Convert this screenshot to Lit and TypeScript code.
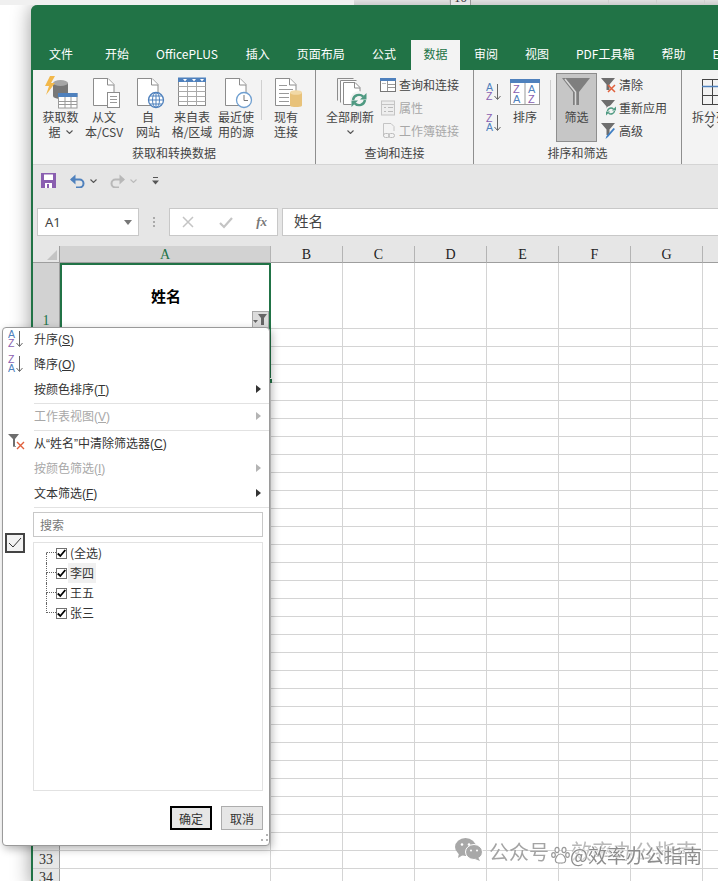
import { LitElement, html, css, svg } from 'lit';
import { customElement } from 'lit/decorators.js';

const BLUE = '#4f81bd';
const GRAY = '#8c8c8c';
const PURPLE = '#8a5fb0';

const doc = svg`<path d="M6.5 2.5H21l6 6v21H6.5z" fill="#fff" stroke="${GRAY}"/><path d="M20.5 2.5v6.5H27" fill="#fff" stroke="${GRAY}"/>`;

const smallFunnel = (c = '#6e6e6e') => svg`<path d="M1 1h14L9.5 7.5V13H6.5V7.5z" fill="${c}"/>`;
const redX = svg`<path d="M8 8l7 7M15 8l-7 7" stroke="#e0603c" stroke-width="1.5"/>`;
const refresh = (cx: number, cy: number, r: number, w = 2) => svg`
  <path d="M${cx - r} ${cy}a${r} ${r} 0 0 1 ${r * 1.7} ${-r * 0.55}" fill="none" stroke="#4f9a82" stroke-width="${w}"/>
  <path d="M${cx + r} ${cy}a${r} ${r} 0 0 1 ${-r * 1.7} ${r * 0.55}" fill="none" stroke="#4f9a82" stroke-width="${w}"/>
  <path d="M${cx + r + 1.5} ${cy - r - 1}v${r + 0.5}h${-r - 0.5}z" fill="#4f9a82"/>
  <path d="M${cx - r - 1.5} ${cy + r + 1}v${-r - 0.5}h${r + 0.5}z" fill="#4f9a82"/>`;

const sortAz = (top: string, bottom: string, topC: string, botC: string) => html`<svg width="16" height="18" viewBox="0 0 16 18">
  <text x="0" y="8" font-family="Liberation Sans" font-size="10.5" fill="${topC}">${top}</text>
  <text x="0" y="17" font-family="Liberation Sans" font-size="10.5" fill="${botC}">${bottom}</text>
  <path d="M11.5 1v15M8.5 13l3 3.5 3-3.5" fill="none" stroke="#666"/></svg>`;

const icons = {
  getData: html`<svg width="34" height="33" viewBox="0 0 34 33">
    <ellipse cx="16.5" cy="20" rx="7.5" ry="3" fill="#777"/><rect x="9" y="7" width="15" height="13" fill="#777"/>
    <ellipse cx="16.5" cy="7" rx="7.5" ry="3" fill="#a6a6a6"/>
    <path d="M6 0L1 10h4L2 19l9-12H7l4-7z" fill="#f2b84b"/>
    <rect x="14.5" y="17.5" width="18.5" height="14.5" fill="#fff" stroke="#9a9a9a"/><rect x="14" y="17" width="19.5" height="4" fill="${BLUE}"/>
    <path d="M14.5 25.5h18.5M14.5 28.500h18.500M21 21v11M27 21v11" stroke="#9a9a9a"/></svg>`,
  fromText: html`<svg width="34" height="33" viewBox="0 0 34 33">${doc}
    <rect x="20.500" y="16.500" width="12" height="15" fill="#fff" stroke="${GRAY}"/>
    <path d="M23 20.500h7M23 23.500h7M23 26.500h7" stroke="#999"/></svg>`,
  fromWeb: html`<svg width="34" height="33" viewBox="0 0 34 33">${doc}
    <circle cx="25" cy="24" r="7.500" fill="#fff" stroke="${BLUE}" stroke-width="1.300"/>
    <ellipse cx="25" cy="24" rx="3.500" ry="7.500" fill="none" stroke="${BLUE}"/>
    <path d="M17.500 24h15M19 20h12M19 28h12M25 16.500v15" stroke="${BLUE}" fill="none"/></svg>`,
  fromTable: html`<svg width="34" height="33" viewBox="0 0 34 33">
    <rect x="3.500" y="2.500" width="27" height="27" fill="#fff" stroke="${GRAY}"/><rect x="3" y="1.500" width="28" height="4.500" fill="${BLUE}"/>
    <path d="M8 3h4l-2 2.500zM17 3h4l-2 2.500zM25 3h4l-2 2.500z" fill="#fff"/>
    <path d="M3.500 10.500h27M3.500 15.500h27M3.500 20.500h27M3.500 25.500h27M12.500 6v24M21.500 6v24" stroke="#aaa"/></svg>`,
  recent: html`<svg width="34" height="33" viewBox="0 0 34 33">${doc}
    <circle cx="25" cy="24" r="7.500" fill="#fff" stroke="#6f9fd0" stroke-width="1.300"/><path d="M25 19v5.500h4" fill="none" stroke="#777"/></svg>`,
  existing: html`<svg width="34" height="33" viewBox="0 0 34 33">${doc}
    <path d="M10 9.500h8M10 13.500h14M10 17.500h10M10 21.500h10M10 25.500h10" stroke="#999"/>
    <path d="M21 16.500v13c0 2 12 2 12 0v-13z" fill="#e8c27a"/><ellipse cx="27" cy="16.500" rx="6" ry="2.300" fill="#f2d9a6"/></svg>`,
  refreshAll: html`<svg width="34" height="33" viewBox="0 0 34 33">
    <path d="M4.500 24.500V2.500h16" fill="none" stroke="${GRAY}"/><path d="M7.500 26.500V4.500h16" fill="#fff" stroke="${GRAY}"/>
    <path d="M10.500 28.500V6.500H22l5 5v17z" fill="#fff" stroke="${GRAY}"/><path d="M21.500 6.500V12H27" fill="none" stroke="${GRAY}"/>
    <circle cx="26" cy="24" r="9" fill="#f3f3f3"/>${refresh(26, 24, 6, 2.400)}</svg>`,
  query: html`<svg width="16" height="16" viewBox="0 0 16 16">
    <rect x="0.500" y="1.500" width="15" height="13" fill="#fff" stroke="#777"/><rect x="0" y="1" width="16" height="3" fill="${BLUE}"/>
    <path d="M7.500 4v10M8 7.500h7M8 10.500h7" stroke="#999"/><path d="M2 6.500h4" stroke="#bbb"/></svg>`,
  props: html`<svg width="16" height="16" viewBox="0 0 16 16">
    <rect x="1.500" y="1" width="13" height="14" fill="#eee" stroke="#c4c4c4"/><path d="M2 4.500h12" stroke="#c4c4c4"/>
    <path d="M4 7.500h2M4 11.500h2M8 7.500h5M8 11.500h5" stroke="#bbb"/></svg>`,
  links: html`<svg width="16" height="17" viewBox="0 0 16 17">
    <path d="M3.500 14V1.500H11l3 3V9" fill="none" stroke="#c4c4c4"/>
    <rect x="3.500" y="11.500" width="6" height="4" rx="2" fill="none" stroke="#bbb"/><rect x="8.500" y="11.500" width="6" height="4" rx="2" fill="none" stroke="#bbb"/></svg>`,
  sortBig: html`<svg width="30" height="33" viewBox="0 0 30 33">
    <rect x="0.500" y="4.500" width="29" height="24" fill="#fff" stroke="#999"/><rect x="0" y="3" width="30" height="4" fill="${BLUE}"/><path d="M15 7v21" stroke="#999"/>
    <text x="3" y="17" font-family="Liberation Sans" font-size="11" fill="${PURPLE}">Z</text><text x="3" y="27" font-family="Liberation Sans" font-size="11" fill="${BLUE}">A</text>
    <text x="18" y="17" font-family="Liberation Sans" font-size="11" fill="${BLUE}">A</text><text x="18" y="27" font-family="Liberation Sans" font-size="11" fill="${PURPLE}">Z</text></svg>`,
  funnelBig: html`<svg width="39" height="35" viewBox="0 0 39 35">
    <path d="M5 4h28L22 18v13h-6V18z" fill="#7f7f7f"/><path d="M8 5l10.500 13v13" fill="none" stroke="#d9d9d9" stroke-width="1.500"/></svg>`,
  clear: html`<svg width="16" height="16" viewBox="0 0 16 16">${smallFunnel()}${redX}</svg>`,
  reapply: html`<svg width="16" height="18" viewBox="0 0 16 18">${smallFunnel()}<circle cx="11" cy="12" r="5.500" fill="#f3f3f3"/>${refresh(11, 12, 3.500, 1.500)}</svg>`,
  advanced: html`<svg width="16" height="18" viewBox="0 0 16 18">${smallFunnel()}<path d="M15 7l-7 8-2.500 2 1-3 7-8z" fill="#3f7fc4"/></svg>`,
  split: html`<svg width="30" height="33" viewBox="0 0 30 33">
    <path d="M7 3.500h23M7 19.500h23M7 28.500h23M7.500 3v7M7.500 10v19M17.500 3v7M17.500 10v19M27.500 3v26" stroke="#444" fill="none"/>
    <path d="M7 10.500h23" stroke="${BLUE}" stroke-width="1.500"/></svg>`,
  save: html`<svg width="15" height="15" viewBox="0 0 15 15">
    <path d="M0 0h15v15H0z" fill="${PURPLE}"/><rect x="3" y="1.500" width="9" height="5.500" fill="#fff"/><rect x="4" y="10" width="7" height="5" fill="#fff"/><rect x="6" y="11" width="2" height="4" fill="${PURPLE}"/></svg>`,
  undo: html`<svg width="15" height="14" viewBox="0 0 15 14">
    <path d="M1.500 5.500h8a4 4 0 0 1 0 8H6" fill="none" stroke="${BLUE}" stroke-width="2"/><path d="M5.500 0.500v10L0 5.500z" fill="${BLUE}"/></svg>`,
  redo: html`<svg width="15" height="14" viewBox="0 0 15 14">
    <path d="M13.500 5.500h-8a4 4 0 0 0 0 8H9" fill="none" stroke="#b8b8b8" stroke-width="2"/><path d="M9.500 0.500v10l5.500-5z" fill="#b8b8b8"/></svg>`,
  caret: (c: string) => html`<svg width="7" height="4" viewBox="0 0 7 4"><path d="M0.500 0.500l3 3 3-3" fill="none" stroke="${c}" stroke-width="1.100"/></svg>`,
  customise: html`<svg width="7" height="8" viewBox="0 0 7 8"><path d="M1 0.500h5" stroke="#555"/><path d="M0 3.500h7L3.500 7.500z" fill="#555"/></svg>`,
  cancel: html`<svg width="14" height="14" viewBox="0 0 14 14"><path d="M2 2l10 10M12 2L2 12" stroke="#c4c4c4" stroke-width="1.500"/></svg>`,
  enter: html`<svg width="14" height="14" viewBox="0 0 14 14"><path d="M1 8l4 4 8-9" fill="none" stroke="#c4c4c4" stroke-width="2.200"/></svg>`,
  corner: html`<svg width="10" height="10" viewBox="0 0 10 10"><path d="M10 0v10H0z" fill="#c4c4c4"/></svg>`,
  cellFilter: html`<svg width="15" height="13" viewBox="0 0 15 13"><path d="M5 1h9L11 5v7H8V5z" fill="#666"/><path d="M0 7h5L2.500 10z" fill="#666"/></svg>`,
  menuClear: html`<svg width="18" height="17" viewBox="0 0 18 17">
    <path d="M0 0h11L7 5v7H5V5z" fill="#6e6e6e"/><path d="M5 12.500h3" stroke="#999"/><path d="M9 8l7 7M16 8l-7 7" stroke="#e0603c" stroke-width="1.400"/></svg>`,
  bigCheck: html`<svg width="16" height="14" viewBox="0 0 16 14"><path d="M2 7l4 4 8-9" fill="none" stroke="#333"/></svg>`,
  tick: html`<svg width="9" height="9" viewBox="0 0 9 9"><path d="M0.800 4.500l2.500 2.500 5-6" fill="none" stroke="#000" stroke-width="1.800"/></svg>`,
  grip: html`<svg width="9" height="9" viewBox="0 0 9 9"><path d="M6 0h2v2H6zM1 5h2v2H1zM6 5h2v2H6z" fill="#b4b4b4"/></svg>`,
  wechat: html`<svg width="28" height="23" viewBox="0 0 28 23">
    <ellipse cx="10.500" cy="9" rx="10.500" ry="9" fill="#a8a8a8"/><path d="M4 15l-1 5 5-3z" fill="#a8a8a8"/>
    <ellipse cx="19" cy="14" rx="8.500" ry="7.500" fill="#a8a8a8" stroke="#fff"/><path d="M23 19l2 4-5-2z" fill="#a8a8a8"/>
    <circle cx="7" cy="6.500" r="1.300" fill="#fff"/><circle cx="14" cy="6.500" r="1.300" fill="#fff"/><circle cx="16" cy="12.500" r="1" fill="#fff"/><circle cx="22" cy="12.500" r="1" fill="#fff"/></svg>`,
  paw: html`<svg width="19" height="19" viewBox="0 0 19 19">
    <g fill="#fff" stroke="#999" stroke-width="1.200"><ellipse cx="6" cy="4" rx="2" ry="2.700"/><ellipse cx="13" cy="4" rx="2" ry="2.700"/>
    <ellipse cx="2.500" cy="9" rx="1.800" ry="2.300"/><ellipse cx="16.500" cy="9" rx="1.800" ry="2.300"/>
    <path d="M9.500 8c3 0 5.500 4 5 7-.4 2.500-3.500 2-5 2s-4.600.5-5-2c-.5-3 2-7 5-7z"/></g></svg>`,
};

const TABS = ['文件', '开始', 'OfficePLUS', '插入', '页面布局', '公式', '数据', '审阅', '视图', 'PDF工具箱', '帮助', 'E'];
const DATA_BUTTONS = [
  { icon: icons.getData, a: '获取数', b: '据', caret: true },
  { icon: icons.fromText, a: '从文', b: '本/CSV' },
  { icon: icons.fromWeb, a: '自', b: '网站' },
  { icon: icons.fromTable, a: '来自表', b: '格/区域' },
  { icon: icons.recent, a: '最近使', b: '用的源' },
];
const COLS = ['B', 'C', 'D', 'E', 'F', 'G', 'H'];
const ROWS = Array.from({ length: 31 }, (_, i) => i + 4);

const MENU = [
  { icon: sortAz('A', 'Z', BLUE, PURPLE), text: '升序', key: 'S' },
  { icon: sortAz('Z', 'A', PURPLE, BLUE), text: '降序', key: 'O' },
  { text: '按颜色排序', key: 'T', arrow: true },
  { sep: true },
  { text: '工作表视图', key: 'V', arrow: true, off: true },
  { sep: true },
  { icon: icons.menuClear, text: '从“姓名”中清除筛选器', key: 'C' },
  { text: '按颜色筛选', key: 'I', arrow: true, off: true },
  { text: '文本筛选', key: 'F', arrow: true },
  { sep: true },
];
const TREE = ['(全选)', '李四', '王五', '张三'];

@customElement('filter-menu')
class FilterMenu extends LitElement {
  static styles = css`
    :host {
      position: absolute;
      left: 2px;
      top: 327px;
      width: 268px;
      height: 519px;
      box-sizing: border-box;
      background: #fff;
      border: 1px solid #9a9a9a;
      border-radius: 4px;
      box-shadow: 2px 3px 8px rgba(0, 0, 0, 0.28);
      font: 12px 'Noto Sans CJK SC', sans-serif;
      color: #333;
    }
    .item { display: flex; align-items: center; height: 25px; box-sizing: border-box; padding-bottom: 4px; }
    .item.off { color: #a8a8a8; }
    .slot { width: 31px; display: flex; padding-left: 5px; box-sizing: border-box; }
    .label { flex: 1; font-family: 'Liberation Sans', 'Noto Sans CJK SC', sans-serif; }
    .arrow { width: 0; height: 0; margin-right: 8px; border-left: 5px solid #333; border-top: 4px solid transparent; border-bottom: 4px solid transparent; }
    .off .arrow { border-left-color: #b4b4b4; }
    .sep { height: 1px; background: #e2e2e2; margin: 0 0 1px 31px; }
    .filter-area { display: grid; grid-template-columns: 30px 230px; grid-template-rows: 25px 249px; row-gap: 5px; margin-top: 4px; }
    .big-check { grid-row: 1 / 3; width: 20px; height: 20px; box-sizing: border-box; margin: 21px 0 0 2px; border: 2px solid #444; background: #f2f2f2; display: flex; align-items: center; justify-content: center; }
    .search { box-sizing: border-box; border: 1px solid #c8c8c8; padding-left: 6px; line-height: 23px; color: #777; }
    .list { box-sizing: border-box; border: 1px solid #e2e2e2; padding-left: 12px; }
    .row { display: flex; height: 20px; align-items: center; }
    .twig { width: 10px; height: 20px; flex: none; }
    .twig i { display: block; box-sizing: border-box; height: 10px; border-left: 1px dotted #666; }
    .twig i:first-child { border-bottom: 1px dotted #666; }
    .row:first-child .twig i:first-child { border-left-color: transparent; }
    .row:last-child .twig i:last-child { border-left-color: transparent; }
    .box { width: 11px; height: 11px; box-sizing: border-box; border: 1px solid #707070; background: #fff; display: flex; align-items: center; justify-content: center; flex: none; }
    .name { margin-left: 1px; padding: 0 2px; line-height: 20px; }
    .name.hover { background: #f0f0f0; }
    .actions { display: flex; justify-content: flex-end; gap: 9px; margin: 15px 6px 0 0; }
    button { box-sizing: border-box; width: 42px; height: 24px; padding: 0; background: #e6e6e6; border: 1px solid #adadad; font: inherit; color: #333; }
    button.main { border: 2px solid #000; }
    .grip { position: absolute; right: 0; bottom: 2px; line-height: 0; }
    u { text-underline-offset: 1px; }
  `;

  render() {
    return html`
      ${MENU.map((m) =>
        m.sep
          ? html`<div class="sep"></div>`
          : html`<div class="item ${m.off ? 'off' : ''}">
              <span class="slot">${m.icon}</span>
              <span class="label">${m.text}(<u>${m.key}</u>)</span>
              ${m.arrow ? html`<span class="arrow"></span>` : ''}
            </div>`
      )}
      <div class="filter-area">
        <div class="big-check">${icons.bigCheck}</div>
        <div class="search">搜索</div>
        <div class="list">
          ${TREE.map(
            (t, i) => html`<div class="row">
              <span class="twig"><i></i><i></i></span>
              <span class="box">${icons.tick}</span>
              <span class="name ${i === 1 ? 'hover' : ''}">${t}</span>
            </div>`
          )}
        </div>
      </div>
      <div class="actions">
        <button class="main">确定</button>
        <button>取消</button>
      </div>
      <div class="grip">${icons.grip}</div>
    `;
  }
}

@customElement('app-root')
class AppRoot extends LitElement {
  static styles = css`
    :host {
      display: block;
      position: relative;
      width: 718px;
      height: 881px;
      overflow: hidden;
      background: #fff;
      font: 12px 'Noto Sans CJK SC', 'Liberation Sans', sans-serif;
      color: #444;
    }
    .behind { display: flex; height: 5px; overflow: hidden; }
    .behind .fill { width: 354px; background: #f0f0f0; }
    .behind .cell { box-sizing: border-box; height: 5px; border-right: 1px solid #cfcfcf; }
    .behind .num { box-sizing: border-box; width: 21px; height: 5px; overflow: hidden; background: #e6e6e6; border: 1px solid #999; border-width: 0 1px; text-align: center; font: 13px/14px 'Liberation Serif', serif; color: #333; }
    .behind .num span { display: block; margin-top: -9px; }
    .window {
      width: 760px;
      margin-left: 31px;
      border-left: 2px solid #217346;
      border-radius: 7px 0 0 0;
      background: #fff;
      box-shadow: 0 0 20px rgba(0, 0, 0, 0.4);
    }
    .title { height: 35px; background: #217346; border-radius: 6px 0 0 0; margin-left: -2px; }
    .tabs { display: flex; height: 30px; gap: 3px; padding-left: 6px; background: #217346; margin-left: -2px; padding-right: 2px; }
    .tab { padding: 0 12px; line-height: 28px; color: #fff; white-space: nowrap; }
    .tab:first-child { margin-right: 5px; }
    .tab:nth-child(3) { margin-right: 1px; }
    .tab.on { background: #f3f3f3; color: #217346; padding: 0 12.500px; margin-right: -1px; }
    .ribbon { display: flex; height: 95px; box-sizing: border-box; background: #f3f3f3; border-bottom: 1px solid #d4d4d4; }
    .group { display: flex; flex-direction: column; height: 94px; box-sizing: border-box; border-right: 1px solid #8e8e8e; flex: none; }
    .g1 { width: 283px; }
    .g2 { width: 158px; }
    .g3 { width: 208px; }
    .g4 { flex: 1; border-right: none; padding-left: 3px; }
    .tools { display: flex; height: 76px; align-items: flex-start; }
    .g1 .tools { padding-left: 6px; }
    .g1 .big:first-child { width: 43px; }
    .g2 .tools { padding-left: 8px; }
    .g3 .tools { padding-left: 12px; }
    .g-name { text-align: center; line-height: 15px; margin-top: -1px; color: #444; }
    .big { display: flex; flex-direction: column; align-items: center; width: 44px; padding-top: 6px; line-height: 15px; text-align: center; flex: none; white-space: nowrap; }
    .big svg { display: block; }
    .big .sub { display: flex; align-items: center; gap: 5px; justify-content: center; }
    .big.wide { width: 52px; }
    .big.thin { width: 30px; }
    .divider { width: 1px; height: 40px; margin: 10px 2px 0 3px; background: #d0d0d0; flex: none; }
    .small-list { display: flex; flex-direction: column; margin: 3px 0 0 4px; }
    .small { display: flex; align-items: center; gap: 3px; height: 23px; white-space: nowrap; }
    .small.off { color: #a8a8a8; }
    .small svg { flex: none; }
    .sort-col { display: flex; flex-direction: column; gap: 13px; width: 16px; margin: 13px 8px 0 0; }
    .filter-btn { box-sizing: border-box; width: 41px; height: 69px; margin: 3px 0 0 5px; background: #c6c6c6; border: 1px solid #8e8e8e; display: flex; flex-direction: column; align-items: center; line-height: 15px; }
    .filter-btn svg { display: block; }
    .g3 .small-list { margin-left: 3px; }
    .split-col { display: flex; flex-direction: column; align-items: center; width: 50px; margin-top: 6px; line-height: 15px; white-space: nowrap; }
    .qat { display: flex; align-items: center; height: 32px; background: #e6e6e6; padding: 0 0 1px 8px; box-sizing: border-box; }
    .qat svg { display: block; flex: none; }
    .formula { display: flex; height: 49px; box-sizing: border-box; padding: 11px 0 0 4px; background: #e6e6e6; }
    .namebox { display: flex; align-items: center; justify-content: space-between; box-sizing: border-box; width: 102px; height: 28px; padding: 0 6px 0 7px; background: #fff; border: 1px solid #c8c8c8; font: 13px 'Noto Sans', sans-serif; color: #444; }
    .namebox i { border-top: 5px solid #777; border-left: 4px solid transparent; border-right: 4px solid transparent; }
    .grabber { width: 30px; display: flex; flex-direction: column; align-items: center; justify-content: center; gap: 2px; height: 28px; }
    .grabber i { width: 2px; height: 2px; background: #aaa; }
    .fx { display: flex; align-items: center; box-sizing: border-box; width: 109px; height: 28px; background: #fff; border: 1px solid #c8c8c8; padding: 0 10px 0 11px; justify-content: space-between; }
    .fx em { font: italic 700 13px 'Liberation Serif', serif; color: #777; }
    .input { flex: 1; height: 28px; box-sizing: border-box; margin-left: 4px; padding-left: 11px; background: #fff; border: 1px solid #c8c8c8; font-size: 14.500px; line-height: 24px; color: #444; }
    .grid-row { display: flex; }
    .rh { width: 27px; flex: none; box-sizing: border-box; background: #e6e6e6; border-right: 1px solid #9e9e9e; border-bottom: 1px solid #c8c8c8; text-align: center; font: 14px 'Liberation Serif', serif; color: #333; height: 18px; line-height: 18px; }
    .c { width: 72px; flex: none; box-sizing: border-box; height: 18px; border-right: 1px solid #d4d4d4; border-bottom: 1px solid #d4d4d4; }
    .c.a { width: 211px; }
    .head { height: 17px; }
    .head .rh { height: 17px; border-bottom: 1px solid #9e9e9e; display: flex; align-items: flex-end; justify-content: flex-end; padding: 0 2px 2px 0; }
    .head .rh svg { display: block; }
    .head .c { height: 17px; background: #e6e6e6; border-right: 1px solid #b4b4b4; border-bottom: 1px solid #9e9e9e; text-align: center; font: 14px 'Liberation Serif', serif; color: #222; line-height: 18px; }
    .head .c.a { background: #d2d2d2; color: #217346; }
    .tall .rh { height: 66px; background: #d2d2d2; color: #217346; display: flex; align-items: flex-end; justify-content: center; line-height: 14px; }
    .tall .c { height: 66px; }
    .tall .c.a { display: flex; align-items: center; justify-content: center; padding-left: 2px; font-size: 15px; font-weight: 700; color: #000; position: relative; }
    .cell-filter { position: absolute; right: 1px; bottom: 0; box-sizing: border-box; width: 17px; height: 17px; background: #dcdcdc; border: 1px solid #a8a8a8; display: flex; align-items: center; justify-content: center; }
    .selection { position: absolute; left: 60px; top: 263px; width: 211px; height: 119px; box-sizing: border-box; border: 2px solid #217346; pointer-events: none; }
    .selection i { position: absolute; right: -3px; bottom: -3px; width: 4px; height: 4px; background: #217346; border: 1px solid #fff; border-width: 1px 0 0 1px; }
    .mark { position: absolute; left: 455px; top: 838px; width: 260px; height: 36px; filter: blur(0.500px); }
    .mark > svg { position: absolute; }
    .mark span { position: absolute; white-space: nowrap; font-size: 20px; line-height: 24px; color: #a4a4a4; }
    .mark .top { left: 34px; top: 2px; }
    .mark .paw { left: 96px; top: 8px; line-height: 0; }
    .mark .fade { left: 116px; top: 0; font-size: 21px; color: #b8b8b8; }
    .mark .front { left: 115px; top: 5px; font-size: 19px; color: #8c8c8c; text-shadow: 0 0 2px #fff, 0 0 2px #fff, 0 0 2px #fff; }
  `;

  render() {
    return html`
      <div class="behind">
        <div class="fill"></div>
        <div class="cell" style="width:96px"></div>
        <div class="num"><span>10</span></div>
        <div class="cell" style="width:138px"></div>
        <div class="cell" style="width:48px"></div>
        <div class="cell" style="width:48px"></div>
      </div>
      <div class="window">
        <div class="title"></div>
        <div class="tabs">
          ${TABS.map((t) => html`<div class="tab ${t === '数据' ? 'on' : ''}">${t}</div>`)}
        </div>
        <div class="ribbon">
          <div class="group g1">
            <div class="tools">
              ${DATA_BUTTONS.map(
                (b) => html`<div class="big">
                  ${b.icon}<span>${b.a}</span>
                  <span class="sub">${b.b}${b.caret ? icons.caret('#555') : ''}</span>
                </div>`
              )}
              <div class="divider"></div>
              <div class="big">${icons.existing}<span>现有</span><span>连接</span></div>
            </div>
            <div class="g-name">获取和转换数据</div>
          </div>
          <div class="group g2">
            <div class="tools">
              <div class="big wide">
                ${icons.refreshAll}<span>全部刷新</span>
                <span class="sub" style="height:15px">${icons.caret('#555')}</span>
              </div>
              <div class="small-list">
                <div class="small">${icons.query}查询和连接</div>
                <div class="small off">${icons.props}属性</div>
                <div class="small off">${icons.links}工作簿链接</div>
              </div>
            </div>
            <div class="g-name">查询和连接</div>
          </div>
          <div class="group g3">
            <div class="tools">
              <div class="sort-col">
                ${sortAz('A', 'Z', BLUE, PURPLE)}${sortAz('Z', 'A', PURPLE, BLUE)}
              </div>
              <div class="big thin">${icons.sortBig}<span>排序</span></div>
              <div class="divider" style="margin-left:10px;margin-right:0"></div>
              <div class="filter-btn">${icons.funnelBig}<span>筛选</span></div>
              <div class="small-list">
                <div class="small">${icons.clear}清除</div>
                <div class="small">${icons.reapply}重新应用</div>
                <div class="small">${icons.advanced}高级</div>
              </div>
            </div>
            <div class="g-name">排序和筛选</div>
          </div>
          <div class="group g4">
            <div class="split-col">${icons.split}<span>拆分列</span>${icons.caret('#555')}</div>
          </div>
        </div>
        <div class="qat">
          ${icons.save}
          <span style="width:14px"></span>${icons.undo}
          <span style="width:5px"></span>${icons.caret('#555')}
          <span style="width:13px"></span>${icons.redo}
          <span style="width:5px"></span>${icons.caret('#bbb')}
          <span style="width:15px"></span>${icons.customise}
        </div>
        <div class="formula">
          <div class="namebox">A1<i></i></div>
          <div class="grabber"><i></i><i></i><i></i></div>
          <div class="fx">${icons.cancel}${icons.enter}<em>fx</em></div>
          <div class="input">姓名</div>
        </div>
        <div class="grid-row head">
          <div class="rh">${icons.corner}</div>
          <div class="c a">A</div>
          ${COLS.map((c) => html`<div class="c">${c}</div>`)}
        </div>
        <div class="grid-row tall">
          <div class="rh">1</div>
          <div class="c a">姓名<span class="cell-filter">${icons.cellFilter}</span></div>
          ${COLS.map(() => html`<div class="c"></div>`)}
        </div>
        ${ROWS.map(
          (r) => html`<div class="grid-row">
            <div class="rh">${r >= 32 ? r : ''}</div>
            <div class="c a"></div>
            ${COLS.map(() => html`<div class="c"></div>`)}
          </div>`
        )}
      </div>
      <div class="selection"><i></i></div>
      <filter-menu></filter-menu>
      <div class="mark">
        ${icons.wechat}
        <span class="top">公众号</span>
        <span class="paw">${icons.paw}</span>
        <span class="fade">效率办公指南</span>
        <span class="front">@效率办公指南</span>
      </div>
    `;
  }
}
